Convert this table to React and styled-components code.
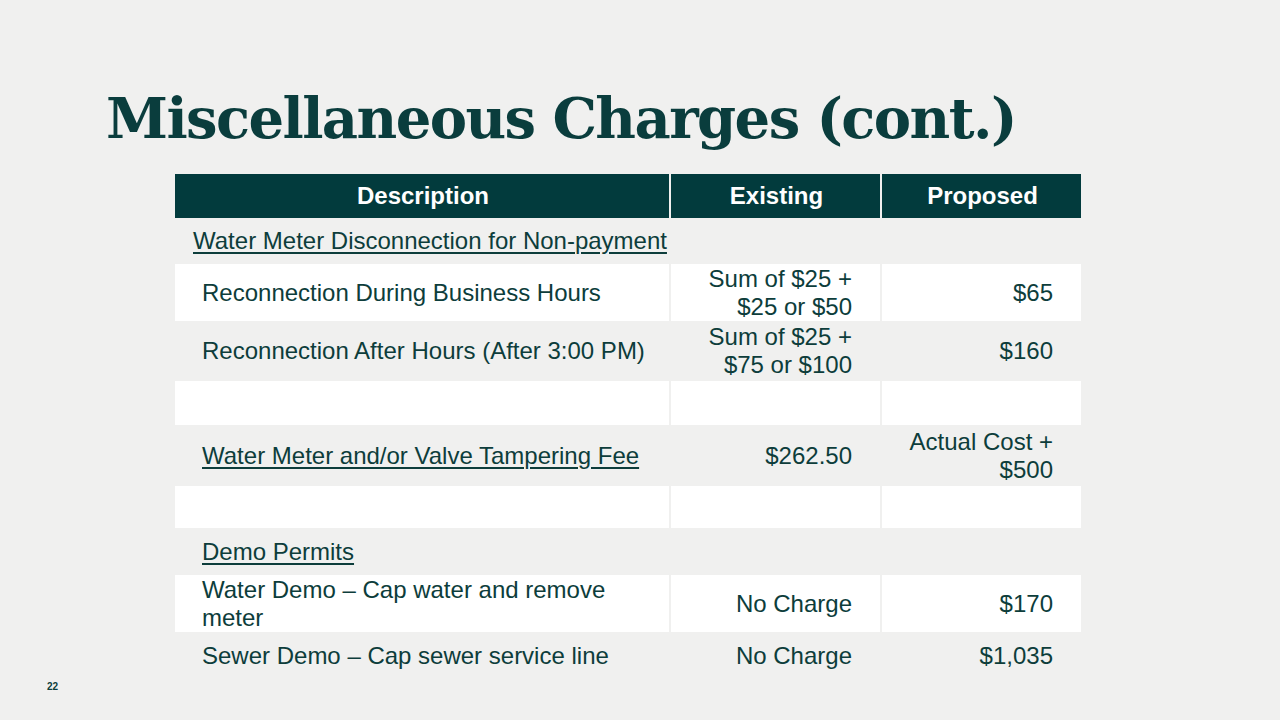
import React from "react"
import styled, { createGlobalStyle } from "styled-components"

const GlobalStyle = createGlobalStyle`
  html, body {
    margin: 0;
    padding: 0;
    background: #f0f0ef;
  }
  body {
    font-family: "Liberation Sans", Arial, sans-serif;
  }
`

const Slide = styled.div`
  width: 1280px;
  height: 720px;
  box-sizing: border-box;
  padding: 78px 0 0 106px;
  display: flex;
  flex-direction: column;
  overflow: hidden;
  background: #f0f0ef;
  color: #0d3d3b;
`

const Title = styled.h1`
  margin: 0;
  font-family: "DejaVu Serif", Georgia, serif;
  font-weight: bold;
  font-size: 56px;
  line-height: 80px;
  color: #0a3d3d;
  letter-spacing: -1.6px;
  white-space: nowrap;
`

const Table = styled.div`
  margin: 16px 0 0 69px;
  width: 906px;
  display: grid;
  grid-template-columns: 494px 209px 199px;
  column-gap: 2px;
  font-size: 24px;
  line-height: 28px;
`

const Head = styled.div`
  height: 44px;
  display: flex;
  align-items: center;
  justify-content: center;
  background: #023b3d;
  color: #ffffff;
  font-weight: bold;
  padding-left: 2px;
`

const Cell = styled.div`
  height: ${p => p.$h}px;
  display: flex;
  align-items: center;
  justify-content: ${p => (p.$right ? "flex-end" : "flex-start")};
  text-align: ${p => (p.$right ? "right" : "left")};
  box-sizing: border-box;
  padding: ${p => (p.$right ? "0 28px 0 0" : `0 0 0 ${p.$indent ?? 27}px`)};
  background: ${p => (p.$white ? "#ffffff" : "transparent")};
  white-space: nowrap;
`

const Heading = styled.span`
  text-decoration: underline;
  text-decoration-thickness: 2px;
  text-underline-offset: 3px;
`

const PageNum = styled.div`
  position: absolute;
  left: 47px;
  top: 681px;
  font-size: 10px;
  font-weight: bold;
  color: #0d3d3b;
`

const rows = [
  { h: 46, desc: <Heading>Water Meter Disconnection for Non-payment</Heading>, indent: 18 },
  { h: 57, white: true, desc: "Reconnection During Business Hours", ex: ["Sum of $25 +", "$25 or $50"], pr: ["$65"] },
  { h: 60, desc: "Reconnection After Hours (After 3:00 PM)", ex: ["Sum of $25 +", "$75 or $100"], pr: ["$160"] },
  { h: 44, white: true },
  { h: 61, desc: <Heading>Water Meter and/or Valve Tampering Fee</Heading>, ex: ["$262.50"], pr: ["Actual Cost +", "$500"] },
  { h: 42, white: true },
  { h: 47, desc: <Heading>Demo Permits</Heading> },
  { h: 57, white: true, desc: ["Water Demo – Cap water and remove", "meter"], ex: ["No Charge"], pr: ["$170"] },
  { h: 48, desc: "Sewer Demo – Cap sewer service line", ex: ["No Charge"], pr: ["$1,035"] }
]

const lines = v => {
  if (!Array.isArray(v)) return v
  return v.map((l, i) => (
    <React.Fragment key={i}>
      {i > 0 && <br />}
      {l}
    </React.Fragment>
  ))
}

const App = () => {
  return (
    <Slide>
      <GlobalStyle />
      <Title>Miscellaneous Charges (cont.)</Title>
      <Table>
        <Head>Description</Head>
        <Head>Existing</Head>
        <Head>Proposed</Head>
        {rows.map((r, i) => (
          <React.Fragment key={i}>
            <Cell $h={r.h} $white={r.white} $indent={r.indent}>
              <div>{lines(r.desc)}</div>
            </Cell>
            <Cell $h={r.h} $white={r.white} $right>
              <div>{lines(r.ex)}</div>
            </Cell>
            <Cell $h={r.h} $white={r.white} $right>
              <div>{lines(r.pr)}</div>
            </Cell>
          </React.Fragment>
        ))}
      </Table>
      <PageNum>22</PageNum>
    </Slide>
  )
}

export default App
